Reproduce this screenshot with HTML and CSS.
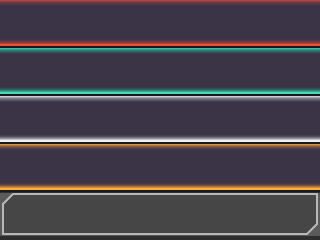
FILE: index.html
```html
<!DOCTYPE html>
<html>
<head>
<meta charset="utf-8">
<link rel="stylesheet" href="styles.css">
</head>
<body>
<div class="screen">
  <div class="band band-red"></div>
  <div class="band band-teal"></div>
  <div class="band band-white"></div>
  <div class="band band-orange"></div>
  <div class="panel">
    <svg class="frame" width="320" height="48" viewBox="0 0 320 48">
      <rect x="0" y="0" width="320" height="48" fill="#2e2e2e"/>
      <rect x="0" y="1" width="320" height="43" fill="#5a5a5a"/>
      <polygon points="13,2 317,2 317,32 307,42 3,42 3,12" fill="#464646" stroke="#b8b8b8" stroke-width="2"/>
    </svg>
  </div>
</div>
</body>
</html>
```
FILE: styles.css
```css
html, body {
  margin: 0;
  padding: 0;
  background: #2e2e2e;
}
.screen {
  width: 320px;
  height: 240px;
  display: flex;
  flex-direction: column;
  overflow: hidden;
}
.band {
  height: 48px;
  flex: none;
}
.band-red {
  background: linear-gradient(to bottom,
    #d04a3a 0, #9a4040 1px, #5e3a48 3px, #3b3447 6px,
    #3b3447 39px, #5a3848 41px, #9a3c3c 43px, #e8503a 44.5px, #e8503a 46px, #1a1a1e 46px, #1a1a1e 48px);
}
.band-teal {
  background: linear-gradient(to bottom,
    #44d8b8 0, #30a890 1px, #2f7070 3px, #3b3447 6px,
    #3b3447 39px, #355555 41px, #2f9080 43px, #44d8b8 44.5px, #44d8b8 46px, #1a1a1e 46px, #1a1a1e 48px);
}
.band-white {
  background: linear-gradient(to bottom,
    #ececec 0, #b0b0b8 1px, #706c7a 3px, #3b3447 6px,
    #3b3447 39px, #5e5a68 41px, #a8a8b0 43px, #f0f0f0 44.5px, #f0f0f0 46px, #1a1a1e 46px, #1a1a1e 48px);
}
.band-orange {
  background: linear-gradient(to bottom,
    #f4a838 0, #c08040 1px, #705048 3px, #3b3447 6px,
    #3b3447 39px, #644840 41px, #b87c38 43px, #f8b040 44.5px, #f8b040 46px, #1a1a1e 46px, #1a1a1e 48px);
}
.panel {
  flex: 1;
}
.frame {
  display: block;
}
```
